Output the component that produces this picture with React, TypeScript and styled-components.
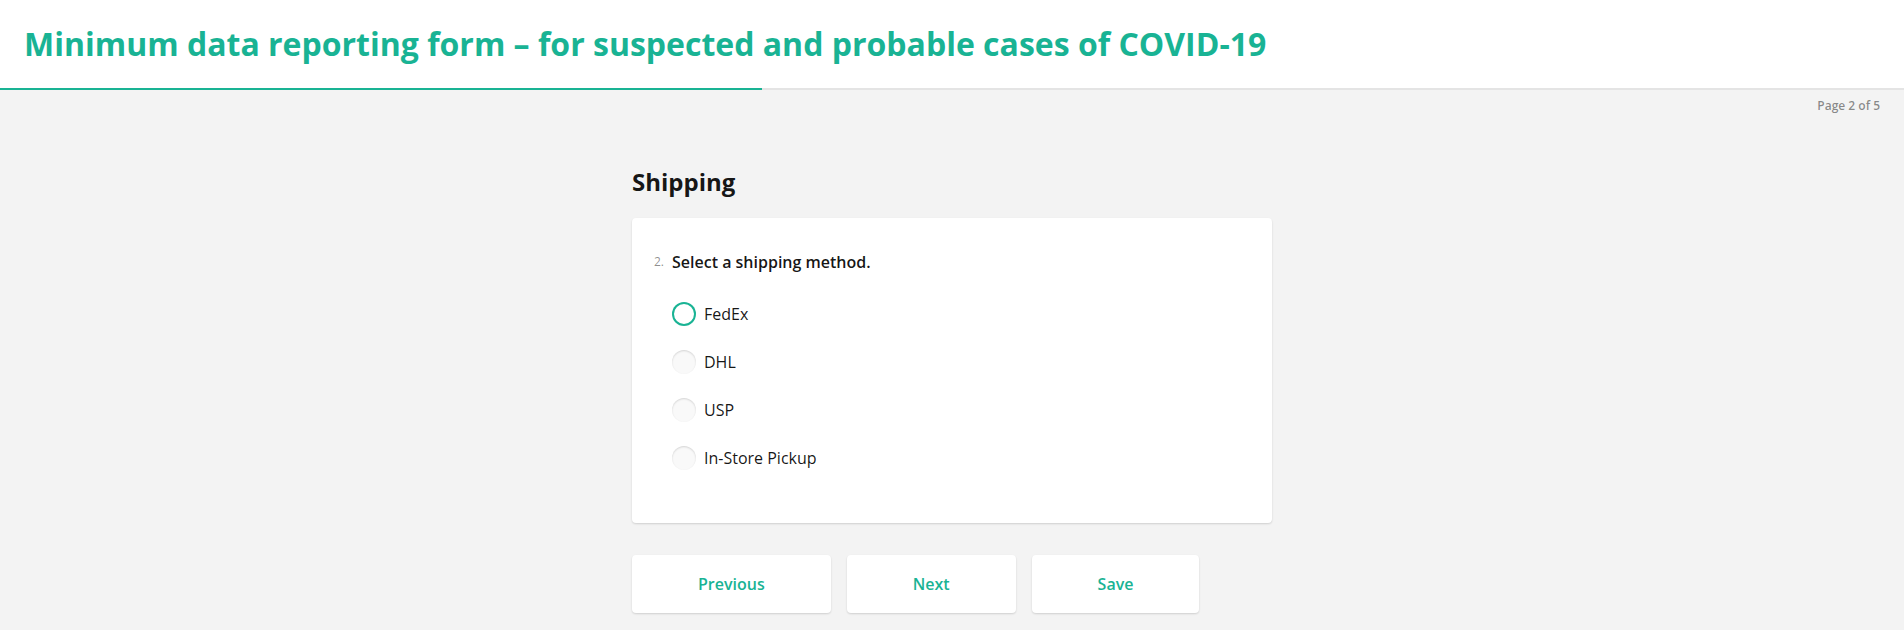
import React, { useState } from "react";
import styled, { createGlobalStyle } from "styled-components";

const GREEN = "#19b394";

const GlobalStyle = createGlobalStyle`
  html, body {
    margin: 0;
    padding: 0;
    background: #f3f3f3;
    font-family: "Open Sans", "Noto Sans", sans-serif;
    color: rgba(0, 0, 0, 0.91);
  }
  * { box-sizing: border-box; }
`;

const Page = styled.div`
  min-height: 630px;
  background: #f3f3f3;
`;

const Header = styled.header`
  background: #ffffff;
  padding: 24px 24px;
`;

const Title = styled.h1`
  margin: 0;
  font-size: 32px;
  line-height: 40px;
  font-weight: 700;
  color: ${GREEN};
`;

const ProgressTrack = styled.div`
  height: 2px;
  background: #e4e4e4;
`;

const ProgressFill = styled.div`
  height: 100%;
  background: ${GREEN};
`;

const ProgressText = styled.div`
  margin-top: 8px;
  padding-right: 24px;
  text-align: right;
  font-size: 12px;
  line-height: 16px;
  font-weight: 600;
  color: rgba(0, 0, 0, 0.45);
`;

const Body = styled.main`
  width: 640px;
  margin: 0 auto;
`;

const PageTitle = styled.h2`
  margin: 52px 0 20px 0;
  font-size: 24px;
  line-height: 32px;
  font-weight: 700;
  color: rgba(0, 0, 0, 0.91);
`;

const Card = styled.section`
  background: #ffffff;
  border-radius: 4px;
  box-shadow: 0 1px 2px rgba(0, 0, 0, 0.15);
  padding: 32px 40px 41px 40px;
`;

const QuestionHeader = styled.div`
  display: flex;
  align-items: flex-start;
`;

const QuestionNumber = styled.span`
  width: 40px;
  margin-left: -40px;
  padding: 4px 8px 4px 0;
  text-align: right;
  font-size: 12px;
  line-height: 16px;
  color: rgba(0, 0, 0, 0.45);
`;

const QuestionTitle = styled.h3`
  margin: 0;
  font-size: 16px;
  line-height: 24px;
  font-weight: 600;
  color: rgba(0, 0, 0, 0.91);
`;

const Options = styled.div`
  margin-top: 16px;
  display: flex;
  flex-direction: column;
`;

const OptionRow = styled.label`
  display: flex;
  align-items: center;
  gap: 8px;
  padding: 12px 0;
  cursor: pointer;
`;

const HiddenInput = styled.input`
  position: absolute;
  opacity: 0;
  width: 0;
  height: 0;
  margin: 0;
`;

const RadioDecorator = styled.span<{ $focused: boolean }>`
  flex: none;
  width: 24px;
  height: 24px;
  border-radius: 50%;
  background: ${(p) => (p.$focused ? "#ffffff" : "#f9f9f9")};
  box-shadow: ${(p) =>
    p.$focused
      ? `inset 0 0 0 2px ${GREEN}`
      : "inset 0 1px 2px rgba(0, 0, 0, 0.15)"};
`;

const OptionLabel = styled.span`
  font-size: 16px;
  line-height: 24px;
  color: rgba(0, 0, 0, 0.91);
`;

const Nav = styled.div`
  display: flex;
  gap: 16px;
  margin-top: 32px;
`;

const NavButton = styled.button`
  border: none;
  background: #ffffff;
  border-radius: 4px;
  box-shadow: 0 1px 2px rgba(0, 0, 0, 0.15);
  padding: 17px 66px;
  font-family: "Open Sans", "Noto Sans", sans-serif;
  font-size: 16px;
  line-height: 24px;
  font-weight: 600;
  color: ${GREEN};
  cursor: pointer;
`;

const options = ["FedEx", "DHL", "USP", "In-Store Pickup"];

export default function App() {
  const [value, setValue] = useState<string | null>(null);
  const focused = "FedEx";
  const progress = (2 / 5) * 100;

  return (
    <Page>
      <GlobalStyle />
      <Header>
        <Title>Minimum data reporting form – for suspected and probable cases of COVID-19</Title>
      </Header>
      <ProgressTrack>
        <ProgressFill style={{ width: `${progress}%` }} />
      </ProgressTrack>
      <ProgressText>Page 2 of 5</ProgressText>
      <Body>
        <PageTitle>Shipping</PageTitle>
        <Card>
          <QuestionHeader>
            <QuestionNumber>2.</QuestionNumber>
            <QuestionTitle>Select a shipping method.</QuestionTitle>
          </QuestionHeader>
          <Options>
            {options.map((o) => (
              <OptionRow key={o}>
                <HiddenInput
                  type="radio"
                  name="shipping"
                  value={o}
                  checked={value === o}
                  onChange={() => setValue(o)}
                />
                <RadioDecorator $focused={o === focused} />
                <OptionLabel>{o}</OptionLabel>
              </OptionRow>
            ))}
          </Options>
        </Card>
        <Nav>
          <NavButton>Previous</NavButton>
          <NavButton>Next</NavButton>
          <NavButton>Save</NavButton>
        </Nav>
      </Body>
    </Page>
  );
}
